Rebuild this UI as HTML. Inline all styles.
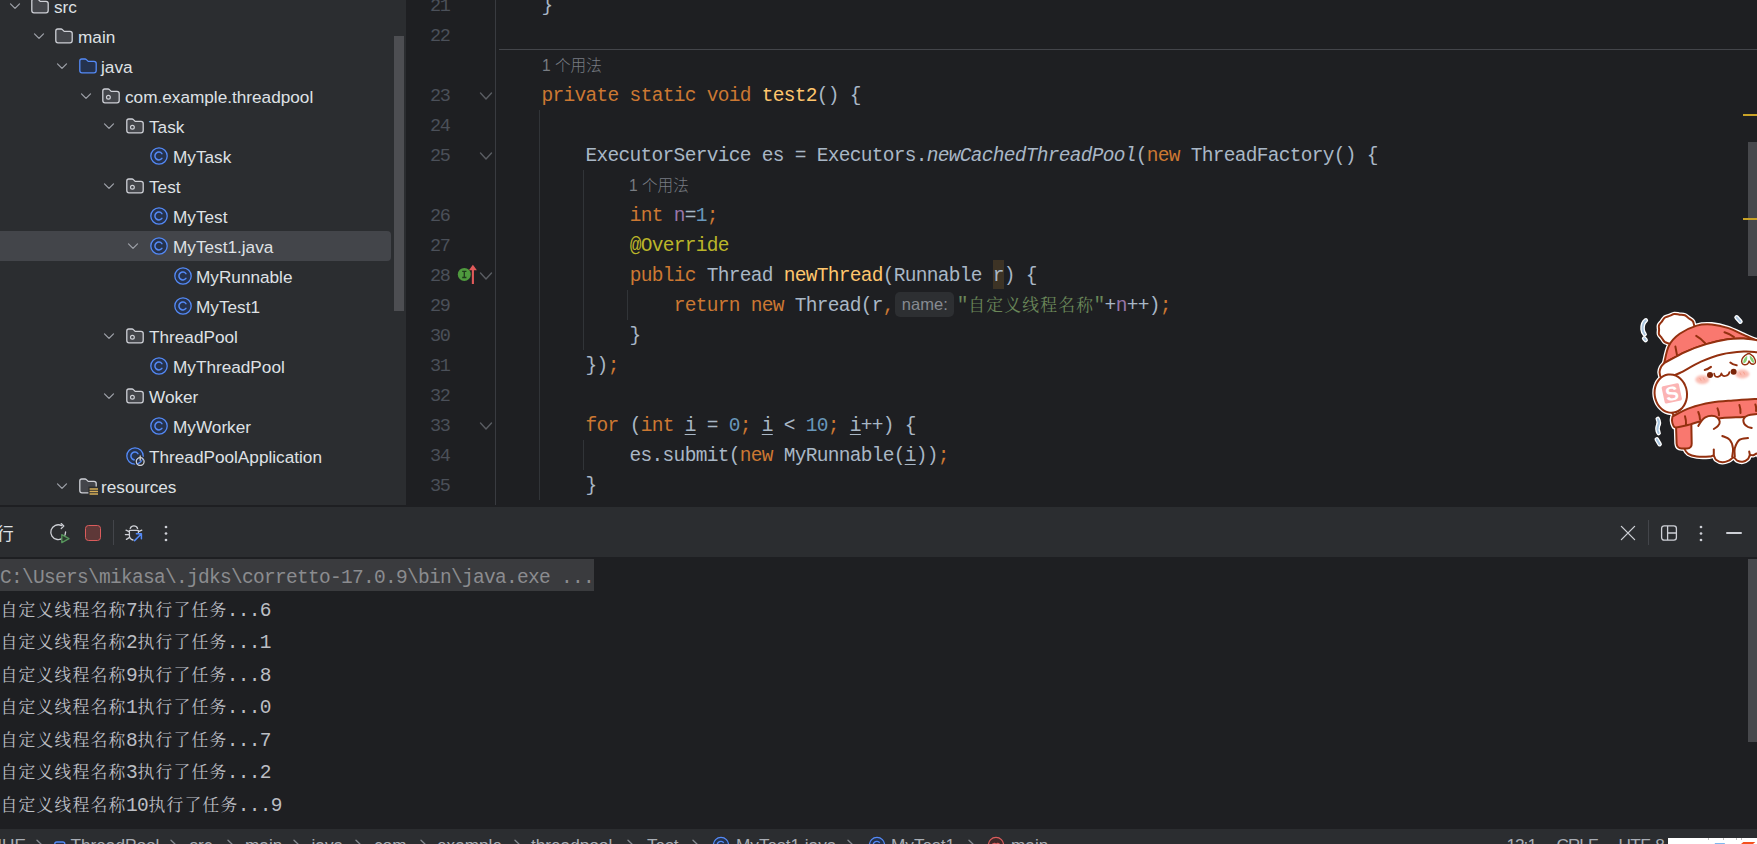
<!DOCTYPE html><html lang="zh"><head><meta charset="utf-8"><title>ThreadPool</title><style>
*{box-sizing:border-box;margin:0;padding:0}
html,body{width:1757px;height:844px;overflow:hidden;background:#1e1f22}
body{position:relative;font-family:"Liberation Sans","Noto Sans CJK SC",sans-serif;color:#dfe1e5}
.abs{position:absolute}
#proj{left:0;top:0;width:406px;height:505px;background:#2b2d30;overflow:hidden}
.row{position:absolute;left:0;width:392px;height:30px;line-height:30px;font-size:17.2px;color:#dfe1e5;white-space:nowrap}
.selbg{position:absolute;left:0;top:231px;width:391px;height:30px;background:#43454a;border-radius:0 4px 4px 0}
.row .t{position:absolute;top:0}
.row svg{position:absolute}
#gut{left:406px;top:0;width:90px;height:506px;background:#1e1f22;border-right:1px solid #393b40}
.ln{position:absolute;left:0;width:43.4px;text-align:right;font-family:"Liberation Mono",monospace;font-size:18.5px;letter-spacing:-1.35px;height:30px;line-height:30px;color:#4b5059;padding-top:2px}
#ed{left:496px;top:0;width:1261px;height:506px;background:#1e1f22;overflow:hidden}
.cl{position:absolute;left:1.6px;height:30px;line-height:30px;white-space:pre;font-family:"Liberation Mono","Noto Serif CJK SC",monospace;font-size:19.5px;letter-spacing:-0.7px;color:#a9b7c6;padding-top:1px}
.cj{font-family:"Noto Serif CJK SC","Liberation Serif",serif;font-size:16.8px;letter-spacing:1.2px;line-height:0;padding-left:0.6px;margin-right:-0.6px}
.k{color:#cc7832}.m{color:#ffc66d}.n{color:#6897bb}.s{color:#6a8759}.an{color:#bbb529}.f{color:#9876aa}
.i{font-style:italic}
.u{text-decoration:underline;text-underline-offset:3px;text-decoration-thickness:1px}
.hint{position:absolute;font-family:"Liberation Sans","Noto Sans CJK SC",sans-serif;font-size:15.6px;font-weight:300;color:#787c83;height:30px;line-height:30px;white-space:nowrap;padding-top:1px}
.ig{position:absolute;width:1px;background:#313438}
#bot{left:0;top:505px;width:1757px;height:323px;background:#1e1f22}
#tb{left:0;top:507px;width:1757px;height:50px;background:#2b2d30}
.con{position:absolute;left:0;height:32px;line-height:32px;white-space:pre;font-family:"Liberation Mono","Noto Serif CJK SC",monospace;font-size:19.5px;letter-spacing:-0.7px;color:#bcbec4;padding-top:2px}
#sb{left:0;top:829px;width:1757px;height:15px;background:#2b2d30;overflow:hidden}
</style></head><body>
<div id="proj" class="abs"><div class="selbg"></div>
<div class="row" style="top:-8px">
<svg style="left:6.7px;top:7px" width="16" height="16" viewBox="0 0 16 16"><path d="M3.5 4.9 L8 9.4 L12.5 4.9" fill="none" stroke="#9da0a8" stroke-width="1.25" stroke-linecap="round" stroke-linejoin="round"/></svg>
<svg style="left:30px;top:4px" width="20" height="20" viewBox="0 0 20 20"><path d="M1.8 5 Q1.8 3 3.8 3 L7 3 Q7.8 3 8.4 3.6 L10.2 5.4 L16 5.4 Q18.2 5.4 18.2 7.6 L18.2 14.6 Q18.2 16.8 16 16.8 L4 16.8 Q1.8 16.8 1.8 14.6 Z" fill="#43454a" stroke="#ced0d6" stroke-width="1.3" stroke-linejoin="round"/></svg>
<span class="t" style="left:54px">src</span></div>
<div class="row" style="top:22px">
<svg style="left:30.7px;top:7px" width="16" height="16" viewBox="0 0 16 16"><path d="M3.5 4.9 L8 9.4 L12.5 4.9" fill="none" stroke="#9da0a8" stroke-width="1.25" stroke-linecap="round" stroke-linejoin="round"/></svg>
<svg style="left:54px;top:4px" width="20" height="20" viewBox="0 0 20 20"><path d="M1.8 5 Q1.8 3 3.8 3 L7 3 Q7.8 3 8.4 3.6 L10.2 5.4 L16 5.4 Q18.2 5.4 18.2 7.6 L18.2 14.6 Q18.2 16.8 16 16.8 L4 16.8 Q1.8 16.8 1.8 14.6 Z" fill="#43454a" stroke="#ced0d6" stroke-width="1.3" stroke-linejoin="round"/></svg>
<span class="t" style="left:78px">main</span></div>
<div class="row" style="top:52px">
<svg style="left:53.7px;top:7px" width="16" height="16" viewBox="0 0 16 16"><path d="M3.5 4.9 L8 9.4 L12.5 4.9" fill="none" stroke="#9da0a8" stroke-width="1.25" stroke-linecap="round" stroke-linejoin="round"/></svg>
<svg style="left:78px;top:4px" width="20" height="20" viewBox="0 0 20 20"><path d="M1.8 5 Q1.8 3 3.8 3 L7 3 Q7.8 3 8.4 3.6 L10.2 5.4 L16 5.4 Q18.2 5.4 18.2 7.6 L18.2 14.6 Q18.2 16.8 16 16.8 L4 16.8 Q1.8 16.8 1.8 14.6 Z" fill="#25324d" stroke="#548af7" stroke-width="1.3" stroke-linejoin="round"/></svg>
<span class="t" style="left:101px">java</span></div>
<div class="row" style="top:82px">
<svg style="left:77.7px;top:7px" width="16" height="16" viewBox="0 0 16 16"><path d="M3.5 4.9 L8 9.4 L12.5 4.9" fill="none" stroke="#9da0a8" stroke-width="1.25" stroke-linecap="round" stroke-linejoin="round"/></svg>
<svg style="left:101px;top:4px" width="20" height="20" viewBox="0 0 20 20"><path d="M1.8 5 Q1.8 3 3.8 3 L7 3 Q7.8 3 8.4 3.6 L10.2 5.4 L16 5.4 Q18.2 5.4 18.2 7.6 L18.2 14.6 Q18.2 16.8 16 16.8 L4 16.8 Q1.8 16.8 1.8 14.6 Z" fill="#43454a" stroke="#ced0d6" stroke-width="1.3" stroke-linejoin="round"/><circle cx="7.4" cy="11.3" r="1.9" fill="none" stroke="#ced0d6" stroke-width="1.2"/></svg>
<span class="t" style="left:125px">com.example.threadpool</span></div>
<div class="row" style="top:112px">
<svg style="left:100.7px;top:7px" width="16" height="16" viewBox="0 0 16 16"><path d="M3.5 4.9 L8 9.4 L12.5 4.9" fill="none" stroke="#9da0a8" stroke-width="1.25" stroke-linecap="round" stroke-linejoin="round"/></svg>
<svg style="left:125px;top:4px" width="20" height="20" viewBox="0 0 20 20"><path d="M1.8 5 Q1.8 3 3.8 3 L7 3 Q7.8 3 8.4 3.6 L10.2 5.4 L16 5.4 Q18.2 5.4 18.2 7.6 L18.2 14.6 Q18.2 16.8 16 16.8 L4 16.8 Q1.8 16.8 1.8 14.6 Z" fill="#43454a" stroke="#ced0d6" stroke-width="1.3" stroke-linejoin="round"/><circle cx="7.4" cy="11.3" r="1.9" fill="none" stroke="#ced0d6" stroke-width="1.2"/></svg>
<span class="t" style="left:149px">Task</span></div>
<div class="row" style="top:142px">
<svg style="left:149px;top:4px" width="20" height="20" viewBox="0 0 20 20"><circle cx="10" cy="10" r="8.2" fill="#25324d" stroke="#548af7" stroke-width="1.3"/><path d="M12.9 7.6 A3.9 3.9 0 1 0 12.9 12.4" fill="none" stroke="#548af7" stroke-width="1.5" stroke-linecap="round"/></svg>
<span class="t" style="left:173px">MyTask</span></div>
<div class="row" style="top:172px">
<svg style="left:100.7px;top:7px" width="16" height="16" viewBox="0 0 16 16"><path d="M3.5 4.9 L8 9.4 L12.5 4.9" fill="none" stroke="#9da0a8" stroke-width="1.25" stroke-linecap="round" stroke-linejoin="round"/></svg>
<svg style="left:125px;top:4px" width="20" height="20" viewBox="0 0 20 20"><path d="M1.8 5 Q1.8 3 3.8 3 L7 3 Q7.8 3 8.4 3.6 L10.2 5.4 L16 5.4 Q18.2 5.4 18.2 7.6 L18.2 14.6 Q18.2 16.8 16 16.8 L4 16.8 Q1.8 16.8 1.8 14.6 Z" fill="#43454a" stroke="#ced0d6" stroke-width="1.3" stroke-linejoin="round"/><circle cx="7.4" cy="11.3" r="1.9" fill="none" stroke="#ced0d6" stroke-width="1.2"/></svg>
<span class="t" style="left:149px">Test</span></div>
<div class="row" style="top:202px">
<svg style="left:149px;top:4px" width="20" height="20" viewBox="0 0 20 20"><circle cx="10" cy="10" r="8.2" fill="#25324d" stroke="#548af7" stroke-width="1.3"/><path d="M12.9 7.6 A3.9 3.9 0 1 0 12.9 12.4" fill="none" stroke="#548af7" stroke-width="1.5" stroke-linecap="round"/></svg>
<span class="t" style="left:173px">MyTest</span></div>
<div class="row sel" style="top:232px">
<svg style="left:124.7px;top:7px" width="16" height="16" viewBox="0 0 16 16"><path d="M3.5 4.9 L8 9.4 L12.5 4.9" fill="none" stroke="#9da0a8" stroke-width="1.25" stroke-linecap="round" stroke-linejoin="round"/></svg>
<svg style="left:149px;top:4px" width="20" height="20" viewBox="0 0 20 20"><circle cx="10" cy="10" r="8.2" fill="#25324d" stroke="#548af7" stroke-width="1.3"/><path d="M12.9 7.6 A3.9 3.9 0 1 0 12.9 12.4" fill="none" stroke="#548af7" stroke-width="1.5" stroke-linecap="round"/></svg>
<span class="t" style="left:173px">MyTest1.java</span></div>
<div class="row" style="top:262px">
<svg style="left:173px;top:4px" width="20" height="20" viewBox="0 0 20 20"><circle cx="10" cy="10" r="8.2" fill="#25324d" stroke="#548af7" stroke-width="1.3"/><path d="M12.9 7.6 A3.9 3.9 0 1 0 12.9 12.4" fill="none" stroke="#548af7" stroke-width="1.5" stroke-linecap="round"/></svg>
<span class="t" style="left:196px">MyRunnable</span></div>
<div class="row" style="top:292px">
<svg style="left:173px;top:4px" width="20" height="20" viewBox="0 0 20 20"><circle cx="10" cy="10" r="8.2" fill="#25324d" stroke="#548af7" stroke-width="1.3"/><path d="M12.9 7.6 A3.9 3.9 0 1 0 12.9 12.4" fill="none" stroke="#548af7" stroke-width="1.5" stroke-linecap="round"/></svg>
<span class="t" style="left:196px">MyTest1</span></div>
<div class="row" style="top:322px">
<svg style="left:100.7px;top:7px" width="16" height="16" viewBox="0 0 16 16"><path d="M3.5 4.9 L8 9.4 L12.5 4.9" fill="none" stroke="#9da0a8" stroke-width="1.25" stroke-linecap="round" stroke-linejoin="round"/></svg>
<svg style="left:125px;top:4px" width="20" height="20" viewBox="0 0 20 20"><path d="M1.8 5 Q1.8 3 3.8 3 L7 3 Q7.8 3 8.4 3.6 L10.2 5.4 L16 5.4 Q18.2 5.4 18.2 7.6 L18.2 14.6 Q18.2 16.8 16 16.8 L4 16.8 Q1.8 16.8 1.8 14.6 Z" fill="#43454a" stroke="#ced0d6" stroke-width="1.3" stroke-linejoin="round"/><circle cx="7.4" cy="11.3" r="1.9" fill="none" stroke="#ced0d6" stroke-width="1.2"/></svg>
<span class="t" style="left:149px">ThreadPool</span></div>
<div class="row" style="top:352px">
<svg style="left:149px;top:4px" width="20" height="20" viewBox="0 0 20 20"><circle cx="10" cy="10" r="8.2" fill="#25324d" stroke="#548af7" stroke-width="1.3"/><path d="M12.9 7.6 A3.9 3.9 0 1 0 12.9 12.4" fill="none" stroke="#548af7" stroke-width="1.5" stroke-linecap="round"/></svg>
<span class="t" style="left:173px">MyThreadPool</span></div>
<div class="row" style="top:382px">
<svg style="left:100.7px;top:7px" width="16" height="16" viewBox="0 0 16 16"><path d="M3.5 4.9 L8 9.4 L12.5 4.9" fill="none" stroke="#9da0a8" stroke-width="1.25" stroke-linecap="round" stroke-linejoin="round"/></svg>
<svg style="left:125px;top:4px" width="20" height="20" viewBox="0 0 20 20"><path d="M1.8 5 Q1.8 3 3.8 3 L7 3 Q7.8 3 8.4 3.6 L10.2 5.4 L16 5.4 Q18.2 5.4 18.2 7.6 L18.2 14.6 Q18.2 16.8 16 16.8 L4 16.8 Q1.8 16.8 1.8 14.6 Z" fill="#43454a" stroke="#ced0d6" stroke-width="1.3" stroke-linejoin="round"/><circle cx="7.4" cy="11.3" r="1.9" fill="none" stroke="#ced0d6" stroke-width="1.2"/></svg>
<span class="t" style="left:149px">Woker</span></div>
<div class="row" style="top:412px">
<svg style="left:149px;top:4px" width="20" height="20" viewBox="0 0 20 20"><circle cx="10" cy="10" r="8.2" fill="#25324d" stroke="#548af7" stroke-width="1.3"/><path d="M12.9 7.6 A3.9 3.9 0 1 0 12.9 12.4" fill="none" stroke="#548af7" stroke-width="1.5" stroke-linecap="round"/></svg>
<span class="t" style="left:173px">MyWorker</span></div>
<div class="row" style="top:442px">
<svg style="left:125px;top:4px" width="20" height="20" viewBox="0 0 20 20"><circle cx="10" cy="10" r="8.2" fill="#25324d" stroke="#548af7" stroke-width="1.3"/><path d="M12.9 7.6 A3.9 3.9 0 1 0 12.9 12.4" fill="none" stroke="#548af7" stroke-width="1.5" stroke-linecap="round"/><circle cx="15.2" cy="15.6" r="5.2" fill="none" stroke="#2b2d30" stroke-width="1.2"/><path d="M15.2 9.2 V14.4" stroke="#2b2d30" stroke-width="3.2"/><circle cx="15.2" cy="15.6" r="3.9" fill="none" stroke="#ced0d6" stroke-width="1.3"/><path d="M15.2 10 V14.2" stroke="#ced0d6" stroke-width="1.3" stroke-linecap="round"/></svg>
<span class="t" style="left:149px">ThreadPoolApplication</span></div>
<div class="row" style="top:472px">
<svg style="left:53.7px;top:7px" width="16" height="16" viewBox="0 0 16 16"><path d="M3.5 4.9 L8 9.4 L12.5 4.9" fill="none" stroke="#9da0a8" stroke-width="1.25" stroke-linecap="round" stroke-linejoin="round"/></svg>
<svg style="left:78px;top:4px" width="20" height="20" viewBox="0 0 20 20"><path d="M1.8 5 Q1.8 3 3.8 3 L7 3 Q7.8 3 8.4 3.6 L10.2 5.4 L16 5.4 Q18.2 5.4 18.2 7.6 L18.2 14.6 Q18.2 16.8 16 16.8 L4 16.8 Q1.8 16.8 1.8 14.6 Z" fill="#43454a" stroke="#ced0d6" stroke-width="1.3" stroke-linejoin="round"/><rect x="10.4" y="10.6" width="10" height="10" fill="#2b2d30"/><path d="M11.6 13 H20 M11.6 15.5 H20 M11.6 18 H20" stroke="#d6ae58" stroke-width="1.6"/></svg>
<span class="t" style="left:101px">resources</span></div>
<div class="abs" style="left:394px;top:36px;width:10px;height:275px;background:#4d4e52"></div>
</div>
<div id="gut" class="abs">
<div class="ln" style="top:-10px">21</div>
<div class="ln" style="top:20px">22</div>
<div class="ln" style="top:80px">23</div>
<div class="ln" style="top:110px">24</div>
<div class="ln" style="top:140px">25</div>
<div class="ln" style="top:200px">26</div>
<div class="ln" style="top:230px">27</div>
<div class="ln" style="top:260px">28</div>
<div class="ln" style="top:290px">29</div>
<div class="ln" style="top:320px">30</div>
<div class="ln" style="top:350px">31</div>
<div class="ln" style="top:380px">32</div>
<div class="ln" style="top:410px">33</div>
<div class="ln" style="top:440px">34</div>
<div class="ln" style="top:470px">35</div>
<svg class="abs" style="left:72px;top:87px" width="16" height="16" viewBox="0 0 16 16"><path d="M2.5 6.1 L8 11.9 L13.5 6.1" fill="none" stroke="#5a5d63" stroke-width="1.4" stroke-linecap="round" stroke-linejoin="round"/></svg>
<svg class="abs" style="left:72px;top:147px" width="16" height="16" viewBox="0 0 16 16"><path d="M2.5 6.1 L8 11.9 L13.5 6.1" fill="none" stroke="#5a5d63" stroke-width="1.4" stroke-linecap="round" stroke-linejoin="round"/></svg>
<svg class="abs" style="left:72px;top:267px" width="16" height="16" viewBox="0 0 16 16"><path d="M2.5 6.1 L8 11.9 L13.5 6.1" fill="none" stroke="#5a5d63" stroke-width="1.4" stroke-linecap="round" stroke-linejoin="round"/></svg>
<svg class="abs" style="left:72px;top:417px" width="16" height="16" viewBox="0 0 16 16"><path d="M2.5 6.1 L8 11.9 L13.5 6.1" fill="none" stroke="#5a5d63" stroke-width="1.4" stroke-linecap="round" stroke-linejoin="round"/></svg>
<svg class="abs" style="left:51px;top:263px" width="24" height="24" viewBox="0 0 24 24"><circle cx="7.3" cy="11.4" r="6.5" fill="#4f9a3e"/><path d="M5.2 8.3 H9.4 M7.3 8.3 V14.5 M5.2 14.5 H9.4" stroke="#1f3a1c" stroke-width="1.3" fill="none"/><path d="M15.9 21 V5" stroke="#e05a5a" stroke-width="2.1" fill="none"/><path d="M15.9 1.8 L11.9 7.2 H19.9 Z" fill="#e05a5a"/></svg>
</div>
<div id="ed" class="abs">
<div class="abs" style="left:3px;top:49px;width:1258px;height:1px;background:#43454a"></div>
<div class="ig" style="left:43px;top:110px;height:390px"></div>
<div class="ig" style="left:87px;top:170px;height:180px"></div>
<div class="ig" style="left:131px;top:290px;height:30px"></div>
<div class="ig" style="left:87px;top:440px;height:30px"></div>
<div class="cl" style="top:-10px">    }</div>
<div class="hint" style="left:46px;top:50px">1 个用法</div>
<div class="cl" style="top:80px">    <span class="k">private static void</span> <span class="m">test2</span>() {</div>
<div class="cl" style="top:140px">        ExecutorService es = Executors.<span class="i">newCachedThreadPool</span>(<span class="k">new</span> ThreadFactory() {</div>
<div class="hint" style="left:133px;top:170px">1 个用法</div>
<div class="cl" style="top:200px">            <span class="k">int</span> <span class="f">n</span>=<span class="n">1</span><span class="k">;</span></div>
<div class="cl" style="top:230px">            <span class="an">@Override</span></div>
<div class="cl" style="top:260px">            <span class="k">public</span> Thread <span class="m">newThread</span>(Runnable <span style="background:#3d3325;display:inline-block;height:29px;vertical-align:top;margin-top:-1px;padding-top:1px">r</span>) {</div>
<div class="cl" style="top:290px">                <span class="k">return new</span> Thread(r<span class="k">,</span><span style="display:inline-block;width:63px;height:0;position:relative"><span style="position:absolute;left:1.6px;top:-19px;width:59px;height:25px;background:#2d2f32;border-radius:5px;font-family:'Liberation Sans',sans-serif;font-size:16.5px;letter-spacing:0;line-height:25px;color:#868a91;text-align:center">name:</span></span><span class="s">"<span class="cj">自定义线程名称</span>"</span>+<span class="f">n</span>++)<span class="k">;</span></div>
<div class="cl" style="top:320px">            }</div>
<div class="cl" style="top:350px">        })<span class="k">;</span></div>
<div class="cl" style="top:410px">        <span class="k">for</span> (<span class="k">int</span> <span class="u">i</span> = <span class="n">0</span><span class="k">;</span> <span class="u">i</span> &lt; <span class="n">10</span><span class="k">;</span> <span class="u">i</span>++) {</div>
<div class="cl" style="top:440px">            es.submit(<span class="k">new</span> MyRunnable(<span class="u">i</span>))<span class="k">;</span></div>
<div class="cl" style="top:470px">        }</div>
<div class="abs" style="left:1252px;top:142px;width:9px;height:134px;background:#47484c"></div>
<div class="abs" style="left:1247px;top:113.5px;width:14px;height:2.2px;background:#c9a227"></div>
<div class="abs" style="left:1247px;top:217.5px;width:14px;height:2.2px;background:#c9a227"></div>
</div>
<div id="bot" class="abs"></div>
<div id="tb" class="abs">
<div class="abs" style="left:-3.5px;top:0;height:50px;line-height:54px;font-size:17.3px;color:#dfe1e5">行</div>
<svg class="abs" style="left:48px;top:15px" width="24" height="24" viewBox="0 0 24 24"><path d="M13.6 3.6 A7.4 7.4 0 1 0 17.6 10" fill="none" stroke="#ced0d6" stroke-width="1.3" stroke-linecap="round"/><path d="M13.2 1.6 L15.8 4 L13.2 6.6" fill="none" stroke="#ced0d6" stroke-width="1.3" stroke-linecap="round" stroke-linejoin="round"/><path d="M13.8 12.6 L21 16.6 L13.8 20.6 Z" fill="#2b3b2f" stroke="#57965c" stroke-width="1.3" stroke-linejoin="round"/></svg><div class="abs" style="left:85px;top:18px;width:16px;height:16px;border:1.5px solid #db5c5c;background:#5e3838;border-radius:3.5px"></div><div class="abs" style="left:113px;top:13px;width:1px;height:25px;background:#43454a"></div><svg class="abs" style="left:122px;top:15px" width="24" height="24" viewBox="0 0 24 24"><g fill="none" stroke="#ced0d6" stroke-width="1.3" stroke-linecap="round"><path d="M8.2 6.4 A4 4 0 0 1 15.6 6.4"/><path d="M7.6 8.4 H16.2"/><path d="M7.4 8.6 V13.6 A4.6 4.6 0 0 0 11 18"/><path d="M16.4 8.6 V10.6"/><path d="M7.2 9.6 L4 8.2 M7.2 12.6 H3.4 M7.6 15.4 L4.4 17.4 M16.6 9.6 L19.8 8.2"/></g><path d="M12.6 18.6 L19 12.2 M14.4 11.8 H19.4 V16.8" fill="none" stroke="#548af7" stroke-width="1.5" stroke-linecap="round" stroke-linejoin="round"/></svg><svg class="abs" style="left:163px;top:17px" width="6" height="20" viewBox="0 0 6 20"><circle cx="3" cy="3" r="1.35" fill="#ced0d6"/><circle cx="3" cy="9.5" r="1.35" fill="#ced0d6"/><circle cx="3" cy="16" r="1.35" fill="#ced0d6"/></svg><svg class="abs" style="left:1620px;top:18px" width="16" height="16" viewBox="0 0 16 16"><path d="M1.4 1.4 L14.6 14.6 M14.6 1.4 L1.4 14.6" stroke="#ced0d6" stroke-width="1.3" stroke-linecap="round"/></svg><div class="abs" style="left:1648px;top:13px;width:1px;height:25px;background:#43454a"></div><svg class="abs" style="left:1660px;top:17px" width="18" height="18" viewBox="0 0 18 18"><rect x="1.6" y="1.8" width="14.8" height="14.4" rx="2.6" fill="none" stroke="#ced0d6" stroke-width="1.3"/><path d="M7.6 2 V16 M7.6 9 H16.2" stroke="#ced0d6" stroke-width="1.3"/></svg><svg class="abs" style="left:1698px;top:17px" width="6" height="20" viewBox="0 0 6 20"><circle cx="3" cy="3" r="1.35" fill="#ced0d6"/><circle cx="3" cy="9.5" r="1.35" fill="#ced0d6"/><circle cx="3" cy="16" r="1.35" fill="#ced0d6"/></svg><div class="abs" style="left:1726px;top:25.3px;width:16px;height:1.4px;background:#ced0d6;border-radius:1px"></div>
</div>
<div class="abs" style="left:0;top:559px;width:594px;height:32px;background:#3a3b3e"></div>
<div class="con" style="top:560px;color:#8b8c8f">C:\Users\mikasa\.jdks\corretto-17.0.9\bin\java.exe ...</div>
<div class="con" style="top:592.5px"><span class="cj">自定义线程名称</span>7<span class="cj">执行了任务</span>...6</div>
<div class="con" style="top:625.0px"><span class="cj">自定义线程名称</span>2<span class="cj">执行了任务</span>...1</div>
<div class="con" style="top:657.5px"><span class="cj">自定义线程名称</span>9<span class="cj">执行了任务</span>...8</div>
<div class="con" style="top:690.0px"><span class="cj">自定义线程名称</span>1<span class="cj">执行了任务</span>...0</div>
<div class="con" style="top:722.5px"><span class="cj">自定义线程名称</span>8<span class="cj">执行了任务</span>...7</div>
<div class="con" style="top:755.0px"><span class="cj">自定义线程名称</span>3<span class="cj">执行了任务</span>...2</div>
<div class="con" style="top:787.5px"><span class="cj">自定义线程名称</span>10<span class="cj">执行了任务</span>...9</div>
<div class="abs" style="left:1748px;top:559px;width:9px;height:183px;background:#47484c"></div>
<div id="sb" class="abs"><span class="abs" style="left:-10.4px;top:6px;font-size:17.2px;line-height:20px;color:#a8adb5;white-space:nowrap;letter-spacing:0px">HUE</span><svg class="abs" style="left:34.5px;top:10px" width="10" height="14" viewBox="0 0 10 14"><path d="M2 1.2 L8 7 L2 12.8" fill="none" stroke="#868a91" stroke-width="1.3" stroke-linecap="round" stroke-linejoin="round"/></svg><svg class="abs" style="left:54px;top:8.5px" width="12" height="12" viewBox="0 0 12 12"><rect x="0.8" y="4" width="10" height="9" rx="2" fill="#25324d" stroke="#548af7" stroke-width="1.4"/></svg><span class="abs" style="left:70.5px;top:6px;font-size:17.2px;line-height:20px;color:#a8adb5;white-space:nowrap;letter-spacing:0px">ThreadPool</span><svg class="abs" style="left:168.5px;top:10px" width="10" height="14" viewBox="0 0 10 14"><path d="M2 1.2 L8 7 L2 12.8" fill="none" stroke="#868a91" stroke-width="1.3" stroke-linecap="round" stroke-linejoin="round"/></svg><span class="abs" style="left:189.5px;top:6px;font-size:17.2px;line-height:20px;color:#a8adb5;white-space:nowrap;letter-spacing:0px">src</span><svg class="abs" style="left:226.0px;top:10px" width="10" height="14" viewBox="0 0 10 14"><path d="M2 1.2 L8 7 L2 12.8" fill="none" stroke="#868a91" stroke-width="1.3" stroke-linecap="round" stroke-linejoin="round"/></svg><span class="abs" style="left:245px;top:6px;font-size:17.2px;line-height:20px;color:#a8adb5;white-space:nowrap;letter-spacing:0px">main</span><svg class="abs" style="left:291.5px;top:10px" width="10" height="14" viewBox="0 0 10 14"><path d="M2 1.2 L8 7 L2 12.8" fill="none" stroke="#868a91" stroke-width="1.3" stroke-linecap="round" stroke-linejoin="round"/></svg><span class="abs" style="left:311.5px;top:6px;font-size:17.2px;line-height:20px;color:#a8adb5;white-space:nowrap;letter-spacing:0px">java</span><svg class="abs" style="left:353.5px;top:10px" width="10" height="14" viewBox="0 0 10 14"><path d="M2 1.2 L8 7 L2 12.8" fill="none" stroke="#868a91" stroke-width="1.3" stroke-linecap="round" stroke-linejoin="round"/></svg><span class="abs" style="left:374px;top:6px;font-size:17.2px;line-height:20px;color:#a8adb5;white-space:nowrap;letter-spacing:0px">com</span><svg class="abs" style="left:419.0px;top:10px" width="10" height="14" viewBox="0 0 10 14"><path d="M2 1.2 L8 7 L2 12.8" fill="none" stroke="#868a91" stroke-width="1.3" stroke-linecap="round" stroke-linejoin="round"/></svg><span class="abs" style="left:437px;top:6px;font-size:17.2px;line-height:20px;color:#a8adb5;white-space:nowrap;letter-spacing:0px">example</span><svg class="abs" style="left:512.5px;top:10px" width="10" height="14" viewBox="0 0 10 14"><path d="M2 1.2 L8 7 L2 12.8" fill="none" stroke="#868a91" stroke-width="1.3" stroke-linecap="round" stroke-linejoin="round"/></svg><span class="abs" style="left:531px;top:6px;font-size:17.2px;line-height:20px;color:#a8adb5;white-space:nowrap;letter-spacing:0px">threadpool</span><svg class="abs" style="left:625.5px;top:10px" width="10" height="14" viewBox="0 0 10 14"><path d="M2 1.2 L8 7 L2 12.8" fill="none" stroke="#868a91" stroke-width="1.3" stroke-linecap="round" stroke-linejoin="round"/></svg><span class="abs" style="left:647px;top:6px;font-size:17.2px;line-height:20px;color:#a8adb5;white-space:nowrap;letter-spacing:0px">Test</span><svg class="abs" style="left:691.0px;top:10px" width="10" height="14" viewBox="0 0 10 14"><path d="M2 1.2 L8 7 L2 12.8" fill="none" stroke="#868a91" stroke-width="1.3" stroke-linecap="round" stroke-linejoin="round"/></svg><svg class="abs" style="left:712px;top:7px" width="18" height="18" viewBox="0 0 18 18"><circle cx="9" cy="9" r="7.6" fill="#25324d" stroke="#548af7" stroke-width="1.3"/><path d="M11.7 6.8 A3.6 3.6 0 1 0 11.7 11.2" fill="none" stroke="#548af7" stroke-width="1.4"/></svg><span class="abs" style="left:736px;top:6px;font-size:17.2px;line-height:20px;color:#a8adb5;white-space:nowrap;letter-spacing:0px">MyTest1.java</span><svg class="abs" style="left:845.5px;top:10px" width="10" height="14" viewBox="0 0 10 14"><path d="M2 1.2 L8 7 L2 12.8" fill="none" stroke="#868a91" stroke-width="1.3" stroke-linecap="round" stroke-linejoin="round"/></svg><svg class="abs" style="left:867.5px;top:7px" width="18" height="18" viewBox="0 0 18 18"><circle cx="9" cy="9" r="7.6" fill="#25324d" stroke="#548af7" stroke-width="1.3"/><path d="M11.7 6.8 A3.6 3.6 0 1 0 11.7 11.2" fill="none" stroke="#548af7" stroke-width="1.4"/></svg><span class="abs" style="left:891px;top:6px;font-size:17.2px;line-height:20px;color:#a8adb5;white-space:nowrap;letter-spacing:0px">MyTest1</span><svg class="abs" style="left:967.0px;top:10px" width="10" height="14" viewBox="0 0 10 14"><path d="M2 1.2 L8 7 L2 12.8" fill="none" stroke="#868a91" stroke-width="1.3" stroke-linecap="round" stroke-linejoin="round"/></svg><svg class="abs" style="left:987px;top:7px" width="18" height="18" viewBox="0 0 18 18"><circle cx="9" cy="9" r="7.6" fill="#402929" stroke="#db5c5c" stroke-width="1.3"/><path d="M5.6 12 V7.4 M5.6 8.6 Q7.2 6.4 8.8 8 V12 M8.8 8.6 Q10.6 6.4 12.2 8 V12" fill="none" stroke="#db5c5c" stroke-width="1.3"/></svg><span class="abs" style="left:1011px;top:6px;font-size:17.2px;line-height:20px;color:#a8adb5;white-space:nowrap;letter-spacing:0px">main</span><span class="abs" style="left:1506.5px;top:6px;font-size:17.2px;line-height:20px;color:#a8adb5;white-space:nowrap;letter-spacing:-1px">12:1</span><span class="abs" style="left:1556.5px;top:6px;font-size:17.2px;line-height:20px;color:#a8adb5;white-space:nowrap;letter-spacing:-1px">CRLF</span><span class="abs" style="left:1618.5px;top:6px;font-size:17.2px;line-height:20px;color:#a8adb5;white-space:nowrap;letter-spacing:-0.6px">UTF-8</span></div>
<div class="abs" style="left:1668px;top:838.2px;width:89px;height:7px;background:#fff;overflow:hidden"><div class="abs" style="left:46px;top:4.4px;width:10px;height:4px;background:#7db8f0;transform:skewX(-30deg)"></div><div class="abs" style="left:73px;top:3.6px;width:12px;height:4px;background:#f4511e;transform:skewX(-50deg)"></div><div class="abs" style="left:40px;top:0;width:1px;height:1.5px;background:#bbb"></div><div class="abs" style="left:55px;top:0;width:1px;height:1.5px;background:#bbb"></div><div class="abs" style="left:68px;top:0;width:1px;height:1.5px;background:#bbb"></div><div class="abs" style="left:73px;top:0;width:1px;height:1.5px;background:#bbb"></div></div>
<svg class="abs" style="left:1630px;top:300px" width="127" height="175" viewBox="1630 300 127 175"><g fill="#fff" stroke="#fff" stroke-width="4.6" stroke-linejoin="round"><path d="M1695.8 329.8 C1695.8 331.2 1694.7 332.7 1694.2 334.1 C1693.7 335.5 1693.7 337.2 1692.8 338.4 C1691.9 339.7 1690.1 340.4 1688.7 341.4 C1687.4 342.3 1686.3 343.7 1684.8 344.3 C1683.3 344.9 1681.3 344.7 1679.6 344.9 C1677.8 345.1 1676.0 345.8 1674.3 345.6 C1672.7 345.4 1671.2 344.3 1669.5 343.7 C1667.9 343.1 1666.0 342.8 1664.7 341.9 C1663.4 340.9 1662.9 339.3 1661.9 338.1 C1661.0 336.8 1659.5 335.7 1659.0 334.3 C1658.5 332.9 1659.1 331.3 1659.1 329.8 C1659.1 328.3 1658.5 326.7 1659.0 325.3 C1659.5 323.9 1661.0 322.8 1661.9 321.5 C1662.9 320.3 1663.4 318.7 1664.7 317.7 C1666.0 316.8 1667.9 316.5 1669.5 315.9 C1671.2 315.3 1672.7 314.2 1674.3 314.0 C1676.0 313.8 1677.8 314.5 1679.6 314.7 C1681.3 314.9 1683.3 314.7 1684.8 315.3 C1686.3 315.9 1687.4 317.3 1688.7 318.2 C1690.1 319.2 1691.9 319.9 1692.8 321.2 C1693.7 322.4 1693.7 324.1 1694.2 325.5 C1694.7 326.9 1695.8 328.4 1695.8 329.8 Z"/><path d="M1664.0 372.0 C1670.0 365.3 1683.3 359.7 1700.0 356.0 C1716.7 352.3 1753.3 333.7 1764.0 350.0 C1774.7 366.3 1765.2 436.7 1764.0 454.0 C1762.8 471.3 1758.8 453.4 1757.0 453.6 C1755.2 453.8 1754.5 454.9 1753.3 455.2 C1752.1 455.5 1750.9 454.6 1750.0 455.2 C1749.1 455.8 1749.2 457.9 1748.0 459.0 C1746.8 460.1 1744.4 461.5 1742.6 461.8 C1740.8 462.1 1738.8 461.4 1737.3 460.7 C1735.8 460.0 1735.0 457.4 1733.6 457.4 C1732.2 457.4 1730.6 459.9 1728.7 460.7 C1726.8 461.5 1724.4 462.5 1722.3 462.3 C1720.2 462.1 1717.5 460.8 1716.0 459.7 C1714.5 458.6 1714.7 456.1 1713.6 455.6 C1712.5 455.1 1712.3 456.5 1709.5 456.6 C1706.7 456.8 1700.2 457.0 1696.7 456.5 C1693.2 456.0 1690.2 455.1 1688.2 453.8 C1686.2 452.6 1685.8 452.0 1684.6 449.0 C1683.4 446.0 1682.6 441.2 1681.0 436.0 C1679.4 430.8 1677.8 424.7 1675.0 418.0 C1672.2 411.3 1665.8 403.7 1664.0 396.0 C1662.2 388.3 1658.0 378.7 1664.0 372.0 Z"/><path d="M1664.2 363.1 C1665.0 360.2 1666.4 350.4 1669.0 345.5 C1671.6 340.6 1675.1 337.1 1679.7 333.8 C1684.3 330.5 1691.4 327.2 1696.7 325.6 C1702.0 324.0 1706.5 324.0 1711.7 324.4 C1716.9 324.8 1722.4 326.1 1727.7 327.9 C1733.0 329.6 1738.8 332.7 1743.7 334.9 C1748.6 337.1 1754.0 339.5 1757.0 340.9 C1760.0 342.2 1761.2 342.6 1762.0 343.0 L1762.0 341.0 C1761.2 340.9 1760.0 340.6 1757.0 340.2 C1754.0 339.8 1748.6 338.8 1743.7 338.6 C1738.8 338.5 1733.9 338.4 1727.7 339.3 C1721.5 340.2 1713.4 342.0 1706.3 344.1 C1699.2 346.2 1692.0 348.9 1685.0 352.1 C1678.0 355.3 1667.7 361.3 1664.2 363.1 Z"/><path d="M1664.2 363.1 C1667.7 361.3 1678.0 355.3 1685.0 352.1 C1692.0 348.9 1699.2 346.2 1706.3 344.1 C1713.4 342.0 1721.5 340.2 1727.7 339.3 C1733.9 338.4 1738.8 338.5 1743.7 338.6 C1748.6 338.8 1754.0 339.8 1757.0 340.2 C1760.0 340.6 1761.2 340.9 1762.0 341.0 L1762 352.6 L1762.0 352.6 C1761.2 352.5 1760.0 352.4 1757.0 352.2 C1754.0 352.0 1749.5 351.2 1743.7 351.6 C1737.9 352.0 1729.4 352.6 1722.3 354.3 C1715.2 356.0 1708.1 358.6 1701.0 361.7 C1693.9 364.8 1685.2 370.3 1679.7 373.0 C1674.2 375.7 1671.0 376.9 1668.0 377.8 C1665.0 378.7 1663.4 379.5 1662.0 378.6 C1660.6 377.7 1659.8 374.4 1659.6 372.5 C1659.4 370.6 1660.2 368.6 1661.0 367.0 C1661.8 365.4 1663.7 363.8 1664.2 363.1 Z"/><path d="M1676 425 L1676.6 443.5 Q1677 448.4 1681.5 448.4 L1687 448.4 Q1691.8 448.4 1691.7 443.5 L1691.3 422 Z"/><path d="M1672.6 416.3 C1675.5 414.9 1683.8 410.2 1690.3 407.9 C1696.8 405.6 1704.6 403.8 1711.7 402.6 C1718.8 401.4 1725.5 401.1 1733.0 400.5 C1740.5 399.9 1752.2 399.2 1757.0 398.9 C1761.8 398.6 1761.2 398.7 1762.0 398.6 L1762.0 415.0 C1761.2 415.1 1760.0 415.1 1757.0 415.4 C1754.0 415.7 1749.5 416.6 1743.7 417.0 C1737.9 417.4 1729.4 417.4 1722.3 418.1 C1715.2 418.8 1706.3 420.1 1701.0 421.2 C1695.7 422.2 1694.5 423.4 1690.3 424.4 C1686.1 425.4 1678.8 427.3 1676.0 427.4 C1673.2 427.5 1673.9 426.3 1673.2 425.2 C1672.5 424.1 1672.1 422.0 1672.0 420.5 C1671.9 419.0 1672.5 417.0 1672.6 416.3 Z"/><path d="M1686.8 391.3 C1687.1 393.3 1687.1 395.4 1686.9 397.3 C1686.6 399.3 1686.1 401.2 1685.3 403.0 C1684.6 404.7 1683.6 406.3 1682.4 407.7 C1681.2 409.0 1679.8 410.2 1678.3 411.0 C1676.8 411.8 1675.1 412.4 1673.5 412.6 C1671.8 412.8 1670.0 412.8 1668.4 412.4 C1666.7 412.0 1665.0 411.3 1663.5 410.3 C1662.0 409.3 1660.6 408.0 1659.4 406.6 C1658.2 405.2 1657.1 403.4 1656.4 401.6 C1655.6 399.8 1655.0 397.8 1654.8 395.9 C1654.5 393.9 1654.5 391.8 1654.7 389.9 C1655.0 387.9 1655.5 386.0 1656.3 384.2 C1657.0 382.5 1658.0 380.9 1659.2 379.5 C1660.4 378.2 1661.8 377.0 1663.3 376.2 C1664.8 375.4 1666.5 374.8 1668.1 374.6 C1669.8 374.4 1671.6 374.4 1673.2 374.8 C1674.9 375.2 1676.6 375.9 1678.1 376.9 C1679.6 377.9 1681.0 379.2 1682.2 380.6 C1683.4 382.0 1684.5 383.8 1685.2 385.6 C1686.0 387.4 1686.6 389.4 1686.8 391.3 Z"/></g><path d="M1695.8 329.8 C1695.8 331.2 1694.7 332.7 1694.2 334.1 C1693.7 335.5 1693.7 337.2 1692.8 338.4 C1691.9 339.7 1690.1 340.4 1688.7 341.4 C1687.4 342.3 1686.3 343.7 1684.8 344.3 C1683.3 344.9 1681.3 344.7 1679.6 344.9 C1677.8 345.1 1676.0 345.8 1674.3 345.6 C1672.7 345.4 1671.2 344.3 1669.5 343.7 C1667.9 343.1 1666.0 342.8 1664.7 341.9 C1663.4 340.9 1662.9 339.3 1661.9 338.1 C1661.0 336.8 1659.5 335.7 1659.0 334.3 C1658.5 332.9 1659.1 331.3 1659.1 329.8 C1659.1 328.3 1658.5 326.7 1659.0 325.3 C1659.5 323.9 1661.0 322.8 1661.9 321.5 C1662.9 320.3 1663.4 318.7 1664.7 317.7 C1666.0 316.8 1667.9 316.5 1669.5 315.9 C1671.2 315.3 1672.7 314.2 1674.3 314.0 C1676.0 313.8 1677.8 314.5 1679.6 314.7 C1681.3 314.9 1683.3 314.7 1684.8 315.3 C1686.3 315.9 1687.4 317.3 1688.7 318.2 C1690.1 319.2 1691.9 319.9 1692.8 321.2 C1693.7 322.4 1693.7 324.1 1694.2 325.5 C1694.7 326.9 1695.8 328.4 1695.8 329.8 Z" fill="#ffffff" stroke="#93300f" stroke-width="2.0" stroke-linejoin="round"/><path d="M1664.0 372.0 C1670.0 365.3 1683.3 359.7 1700.0 356.0 C1716.7 352.3 1753.3 333.7 1764.0 350.0 C1774.7 366.3 1765.2 436.7 1764.0 454.0 C1762.8 471.3 1758.8 453.4 1757.0 453.6 C1755.2 453.8 1754.5 454.9 1753.3 455.2 C1752.1 455.5 1750.9 454.6 1750.0 455.2 C1749.1 455.8 1749.2 457.9 1748.0 459.0 C1746.8 460.1 1744.4 461.5 1742.6 461.8 C1740.8 462.1 1738.8 461.4 1737.3 460.7 C1735.8 460.0 1735.0 457.4 1733.6 457.4 C1732.2 457.4 1730.6 459.9 1728.7 460.7 C1726.8 461.5 1724.4 462.5 1722.3 462.3 C1720.2 462.1 1717.5 460.8 1716.0 459.7 C1714.5 458.6 1714.7 456.1 1713.6 455.6 C1712.5 455.1 1712.3 456.5 1709.5 456.6 C1706.7 456.8 1700.2 457.0 1696.7 456.5 C1693.2 456.0 1690.2 455.1 1688.2 453.8 C1686.2 452.6 1685.8 452.0 1684.6 449.0 C1683.4 446.0 1682.6 441.2 1681.0 436.0 C1679.4 430.8 1677.8 424.7 1675.0 418.0 C1672.2 411.3 1665.8 403.7 1664.0 396.0 C1662.2 388.3 1658.0 378.7 1664.0 372.0 Z" fill="#ffffff" stroke="#93300f" stroke-width="2.0" stroke-linejoin="round"/><path d="M1722.3 436.0 C1723.5 436.6 1728.0 437.8 1729.8 439.9 C1731.6 441.9 1732.6 445.5 1733.0 448.3 C1733.4 451.1 1732.3 455.4 1732.2 456.8" fill="none" stroke="#93300f" stroke-width="2.0" stroke-linecap="round" stroke-linejoin="round"/><path d="M1748.0 438.1 C1746.6 438.4 1741.6 438.2 1739.4 439.9 C1737.2 441.6 1735.6 445.5 1734.8 448.3 C1734.0 451.1 1734.8 455.4 1734.8 456.8" fill="none" stroke="#93300f" stroke-width="2.0" stroke-linecap="round" stroke-linejoin="round"/><path d="M1713.8 449.5 L1713.8 456" fill="none" stroke="#93300f" stroke-width="2.0" stroke-linecap="round" stroke-linejoin="round"/><path d="M1749.2 451.5 L1750 455.5" fill="none" stroke="#93300f" stroke-width="2.0" stroke-linecap="round" stroke-linejoin="round"/><filter id="bl" x="-30%" y="-30%" width="160%" height="160%"><feGaussianBlur stdDeviation="1.3"/></filter><g filter="url(#bl)"><ellipse cx="1702.3" cy="379.6" rx="7" ry="4.4" fill="#fbbdb3"/><ellipse cx="1742.4" cy="374" rx="7" ry="4.4" fill="#fbbdb3"/></g><path d="M1700 378.4 L1701 380.4 M1703.4 377.8 L1704.4 379.8" fill="none" stroke="#f7a08f" stroke-width="1" stroke-linecap="round" stroke-linejoin="round"/><path d="M1740 372.8 L1741 374.8 M1743.6 372.2 L1744.6 374.2" fill="none" stroke="#f7a08f" stroke-width="1" stroke-linecap="round" stroke-linejoin="round"/><circle cx="1710" cy="375" r="3" fill="#7a2408"/><circle cx="1733.6" cy="371.7" r="3" fill="#7a2408"/><path d="M1704.7 370 Q1708 369.3 1711 366.9" fill="none" stroke="#93300f" stroke-width="2.0" stroke-linecap="round" stroke-linejoin="round"/><path d="M1730.3 362.6 Q1733 365 1736.7 365.3" fill="none" stroke="#93300f" stroke-width="2.0" stroke-linecap="round" stroke-linejoin="round"/><path d="M1714.2 373.6 Q1714.6 377.4 1718 376.8 Q1721 376.2 1721.4 373.4 Q1722.2 376.6 1725.4 376 Q1729 375.4 1729.4 372.2" fill="none" stroke="#93300f" stroke-width="1.7" stroke-linecap="round" stroke-linejoin="round"/><path d="M1664.2 363.1 C1665.0 360.2 1666.4 350.4 1669.0 345.5 C1671.6 340.6 1675.1 337.1 1679.7 333.8 C1684.3 330.5 1691.4 327.2 1696.7 325.6 C1702.0 324.0 1706.5 324.0 1711.7 324.4 C1716.9 324.8 1722.4 326.1 1727.7 327.9 C1733.0 329.6 1738.8 332.7 1743.7 334.9 C1748.6 337.1 1754.0 339.5 1757.0 340.9 C1760.0 342.2 1761.2 342.6 1762.0 343.0 L1762.0 341.0 C1761.2 340.9 1760.0 340.6 1757.0 340.2 C1754.0 339.8 1748.6 338.8 1743.7 338.6 C1738.8 338.5 1733.9 338.4 1727.7 339.3 C1721.5 340.2 1713.4 342.0 1706.3 344.1 C1699.2 346.2 1692.0 348.9 1685.0 352.1 C1678.0 355.3 1667.7 361.3 1664.2 363.1 Z" fill="#f9786f" stroke="#93300f" stroke-width="2.0" stroke-linejoin="round"/><path d="M1675.4 346.6 L1677 355.1" fill="none" stroke="#93300f" stroke-width="2.0" stroke-linecap="round" stroke-linejoin="round"/><path d="M1696.2 335.9 Q1701 338.5 1705.3 343.4" fill="none" stroke="#93300f" stroke-width="2.0" stroke-linecap="round" stroke-linejoin="round"/><path d="M1724.5 332.2 Q1730 333.8 1734 337" fill="none" stroke="#93300f" stroke-width="2.0" stroke-linecap="round" stroke-linejoin="round"/><path d="M1664.2 363.1 C1667.7 361.3 1678.0 355.3 1685.0 352.1 C1692.0 348.9 1699.2 346.2 1706.3 344.1 C1713.4 342.0 1721.5 340.2 1727.7 339.3 C1733.9 338.4 1738.8 338.5 1743.7 338.6 C1748.6 338.8 1754.0 339.8 1757.0 340.2 C1760.0 340.6 1761.2 340.9 1762.0 341.0 L1762 352.6 L1762.0 352.6 C1761.2 352.5 1760.0 352.4 1757.0 352.2 C1754.0 352.0 1749.5 351.2 1743.7 351.6 C1737.9 352.0 1729.4 352.6 1722.3 354.3 C1715.2 356.0 1708.1 358.6 1701.0 361.7 C1693.9 364.8 1685.2 370.3 1679.7 373.0 C1674.2 375.7 1671.0 376.9 1668.0 377.8 C1665.0 378.7 1663.4 379.5 1662.0 378.6 C1660.6 377.7 1659.8 374.4 1659.6 372.5 C1659.4 370.6 1660.2 368.6 1661.0 367.0 C1661.8 365.4 1663.7 363.8 1664.2 363.1 Z" fill="#ffffff" stroke="#93300f" stroke-width="2.0" stroke-linejoin="round"/><path d="M1747.6 353.8 Q1741.6 357 1741.6 361.4 Q1742 365.4 1746.2 364.6 Q1748.6 364 1749 361 Q1750.4 364.6 1753.6 364.2 Q1756.4 363.4 1755 359.4 Q1753.4 355.6 1749.6 353.6 Z" fill="#fff" stroke="#93300f" stroke-width="1.4" stroke-linejoin="round"/><path d="M1747.2 355.8 Q1742.4 359.4 1743.4 363.4 Q1747.8 362.2 1747.2 355.8 Z" fill="#86d072"/><path d="M1749.6 355.6 Q1754.4 358.4 1754 363 Q1749.8 361.6 1749.6 355.6 Z" fill="#86d072"/><path d="M1676 425 L1676.6 443.5 Q1677 448.4 1681.5 448.4 L1687 448.4 Q1691.8 448.4 1691.7 443.5 L1691.3 422 Z" fill="#f9786f" stroke="#93300f" stroke-width="2.0" stroke-linejoin="round"/><path d="M1672.6 416.3 C1675.5 414.9 1683.8 410.2 1690.3 407.9 C1696.8 405.6 1704.6 403.8 1711.7 402.6 C1718.8 401.4 1725.5 401.1 1733.0 400.5 C1740.5 399.9 1752.2 399.2 1757.0 398.9 C1761.8 398.6 1761.2 398.7 1762.0 398.6 L1762.0 415.0 C1761.2 415.1 1760.0 415.1 1757.0 415.4 C1754.0 415.7 1749.5 416.6 1743.7 417.0 C1737.9 417.4 1729.4 417.4 1722.3 418.1 C1715.2 418.8 1706.3 420.1 1701.0 421.2 C1695.7 422.2 1694.5 423.4 1690.3 424.4 C1686.1 425.4 1678.8 427.3 1676.0 427.4 C1673.2 427.5 1673.9 426.3 1673.2 425.2 C1672.5 424.1 1672.1 422.0 1672.0 420.5 C1671.9 419.0 1672.5 417.0 1672.6 416.3 Z" fill="#f9786f" stroke="#93300f" stroke-width="2.0" stroke-linejoin="round"/><path d="M1685 416.3 Q1686.3 420.55 1686 424.8" fill="none" stroke="#93300f" stroke-width="2.0" stroke-linecap="round" stroke-linejoin="round"/><path d="M1698.3 412 Q1699.95 415.75 1700 419.5" fill="none" stroke="#93300f" stroke-width="2.0" stroke-linecap="round" stroke-linejoin="round"/><path d="M1717.5 408.3 Q1719.05 411.75 1719 415.2" fill="none" stroke="#93300f" stroke-width="2.0" stroke-linecap="round" stroke-linejoin="round"/><path d="M1739.4 405 Q1740.75 409.0 1740.5 413" fill="none" stroke="#93300f" stroke-width="2.0" stroke-linecap="round" stroke-linejoin="round"/><path d="M1755.4 404.5 Q1756.5 407.75 1756 411" fill="none" stroke="#93300f" stroke-width="2.0" stroke-linecap="round" stroke-linejoin="round"/><path d="M1699.0 426.5 C1699.4 425.6 1700.4 422.5 1701.4 421.0 C1702.5 419.5 1703.6 418.2 1705.3 417.3 C1707.0 416.4 1709.8 415.7 1711.7 415.7 C1713.7 415.7 1715.7 416.3 1717.0 417.3 C1718.3 418.3 1719.5 420.2 1719.7 421.6 C1719.9 423.0 1719.0 424.7 1718.0 425.9 C1717.0 427.1 1714.5 428.5 1713.8 429.0 L1706 434 Z" fill="#fff"/><path d="M1698.3 425.9 C1698.8 425.1 1700.2 422.4 1701.4 421.0 C1702.6 419.6 1703.6 418.2 1705.3 417.3 C1707.0 416.4 1709.8 415.7 1711.7 415.7 C1713.7 415.7 1715.7 416.3 1717.0 417.3 C1718.3 418.3 1719.5 420.2 1719.7 421.6 C1719.9 423.0 1719.0 424.7 1718.0 425.9 C1717.0 427.1 1714.5 428.5 1713.8 429.0" fill="none" stroke="#93300f" stroke-width="2.0" stroke-linecap="round" stroke-linejoin="round"/><path d="M1762.0 413.6 C1761.2 413.7 1759.3 413.7 1757.0 414.0 C1754.7 414.3 1750.2 414.6 1748.0 415.4 C1745.8 416.2 1744.3 417.5 1743.7 418.9 C1743.1 420.3 1743.5 422.3 1744.2 423.7 C1744.9 425.1 1746.8 426.3 1748.0 427.0 C1749.2 427.7 1751.1 427.8 1751.7 428.0 L1762 430 Z" fill="#fff"/><path d="M1762.0 413.6 C1761.2 413.7 1759.3 413.7 1757.0 414.0 C1754.7 414.3 1750.2 414.6 1748.0 415.4 C1745.8 416.2 1744.3 417.5 1743.7 418.9 C1743.1 420.3 1743.5 422.3 1744.2 423.7 C1744.9 425.1 1746.8 426.3 1748.0 427.0 C1749.2 427.7 1751.1 427.8 1751.7 428.0" fill="none" stroke="#93300f" stroke-width="2.0" stroke-linecap="round" stroke-linejoin="round"/><path d="M1686.8 391.3 C1687.1 393.3 1687.1 395.4 1686.9 397.3 C1686.6 399.3 1686.1 401.2 1685.3 403.0 C1684.6 404.7 1683.6 406.3 1682.4 407.7 C1681.2 409.0 1679.8 410.2 1678.3 411.0 C1676.8 411.8 1675.1 412.4 1673.5 412.6 C1671.8 412.8 1670.0 412.8 1668.4 412.4 C1666.7 412.0 1665.0 411.3 1663.5 410.3 C1662.0 409.3 1660.6 408.0 1659.4 406.6 C1658.2 405.2 1657.1 403.4 1656.4 401.6 C1655.6 399.8 1655.0 397.8 1654.8 395.9 C1654.5 393.9 1654.5 391.8 1654.7 389.9 C1655.0 387.9 1655.5 386.0 1656.3 384.2 C1657.0 382.5 1658.0 380.9 1659.2 379.5 C1660.4 378.2 1661.8 377.0 1663.3 376.2 C1664.8 375.4 1666.5 374.8 1668.1 374.6 C1669.8 374.4 1671.6 374.4 1673.2 374.8 C1674.9 375.2 1676.6 375.9 1678.1 376.9 C1679.6 377.9 1681.0 379.2 1682.2 380.6 C1683.4 382.0 1684.5 383.8 1685.2 385.6 C1686.0 387.4 1686.6 389.4 1686.8 391.3 Z" fill="#ffffff" stroke="#93300f" stroke-width="2.0" stroke-linejoin="round"/><g transform="rotate(-12 1671.8 393.4)"><rect x="1663" y="384.6" width="17.6" height="17.6" rx="1.6" fill="#fbb4b4"/><text x="1671.8" y="400.4" font-family="'Liberation Sans',sans-serif" font-weight="bold" font-size="19.5" text-anchor="middle" fill="#fff">S</text></g><path d="M1645.8 320.4 Q1642.2 323 1642.6 329.4 Q1642.8 332.2 1644.6 334.2" fill="none" stroke="#fff" stroke-width="4.6" stroke-linecap="round" stroke-linejoin="round"/><path d="M1645.8 320.4 Q1642.2 323 1642.6 329.4 Q1642.8 332.2 1644.6 334.2" fill="none" stroke="#a9c4de" stroke-width="2" stroke-linecap="round" stroke-linejoin="round"/><path d="M1644.2 338.4 L1645.6 340" fill="none" stroke="#fff" stroke-width="4.6" stroke-linecap="round" stroke-linejoin="round"/><path d="M1644.2 338.4 L1645.6 340" fill="none" stroke="#a9c4de" stroke-width="2" stroke-linecap="round" stroke-linejoin="round"/><path d="M1736.6 317.4 L1740.4 321.6" fill="none" stroke="#fff" stroke-width="4.6" stroke-linecap="round" stroke-linejoin="round"/><path d="M1736.6 317.4 L1740.4 321.6" fill="none" stroke="#a9c4de" stroke-width="2" stroke-linecap="round" stroke-linejoin="round"/><path d="M1657.8 419 Q1659.8 422.6 1658 426 Q1656.6 429.4 1658.6 433" fill="none" stroke="#fff" stroke-width="4.6" stroke-linecap="round" stroke-linejoin="round"/><path d="M1657.8 419 Q1659.8 422.6 1658 426 Q1656.6 429.4 1658.6 433" fill="none" stroke="#a9c4de" stroke-width="2" stroke-linecap="round" stroke-linejoin="round"/><path d="M1656.8 439.4 L1659.6 444.2" fill="none" stroke="#fff" stroke-width="4.6" stroke-linecap="round" stroke-linejoin="round"/><path d="M1656.8 439.4 L1659.6 444.2" fill="none" stroke="#a9c4de" stroke-width="2" stroke-linecap="round" stroke-linejoin="round"/></svg>
</body></html>
